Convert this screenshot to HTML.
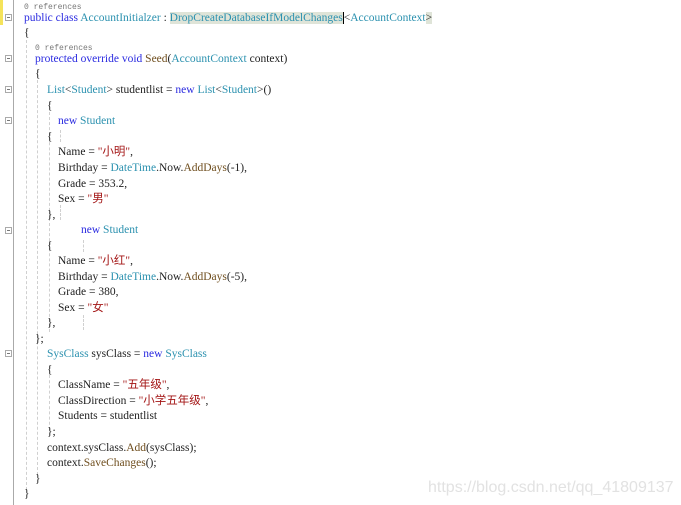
<!DOCTYPE html>
<html><head><meta charset="utf-8"><style>
body{margin:0;width:681px;height:505px;background:#fff;position:relative;overflow:hidden;font-family:"Liberation Serif","Noto Serif CJK SC",serif;font-size:11.5px;color:#1e1e1e}
.l{position:absolute;white-space:pre;line-height:14px;height:14px;margin-top:1px}
.r{font-family:"Liberation Mono",monospace;font-size:8px;color:#777}
.k{color:#2a2ae0}.t{color:#2b91af}.s{color:#a31515;font-family:"Liberation Serif","Noto Sans CJK SC",serif}.m{color:#6f4e1e}
.g{position:absolute;width:0;border-left:1px dashed #d0d0d0}
.b{position:absolute;left:5px;width:5px;height:5px;border:1px solid #aaa;background:#fff}
.b:after{content:"";position:absolute;left:1px;top:2px;width:3px;height:1px;background:#777}
.hl{background:#dfe4d8}
</style></head><body>
<div style="position:absolute;left:0;top:0;width:3px;height:25px;background:#f5e35a"></div>
<div style="position:absolute;left:13px;top:0;width:1px;height:505px;background:#aaa"></div>
<div class="g" style="left:26px;top:40px;height:450px"></div>
<div class="g" style="left:37px;top:80px;height:395px"></div>
<div class="g" style="left:49px;top:112px;height:220px"></div>
<div class="g" style="left:49px;top:375px;height:55px"></div>
<div class="g" style="left:60px;top:130px;height:12px"></div>
<div class="g" style="left:60px;top:205px;height:15px"></div>
<div class="g" style="left:83px;top:240px;height:12px"></div>
<div class="g" style="left:83px;top:315px;height:15px"></div>
<div class="b" style="top:14px"></div>
<div class="b" style="top:55px"></div>
<div class="b" style="top:86px"></div>
<div class="b" style="top:117px"></div>
<div class="b" style="top:227px"></div>
<div class="b" style="top:350px"></div>

<div class="l r" style="left:24px;top:0px">0 references</div>
<div class="l" style="left:24px;top:10px"><span class="k">public class</span> <span class="t">AccountInitialzer</span> : <span class="t hl">DropCreateDatabaseIfModelChanges</span><span style="border-left:1px solid #000">&lt;</span><span class="t">AccountContext</span><span class="hl">&gt;</span></div>
<div class="l" style="left:24px;top:25px">{</div>
<div class="l r" style="left:35px;top:41px">0 references</div>
<div class="l" style="left:35px;top:51px"><span class="k">protected override void</span> <span class="m">Seed</span>(<span class="t">AccountContext</span> context)</div>
<div class="l" style="left:35px;top:66px">{</div>
<div class="l" style="left:47px;top:82px"><span class="t">List</span>&lt;<span class="t">Student</span>&gt; studentlist = <span class="k">new</span> <span class="t">List</span>&lt;<span class="t">Student</span>&gt;()</div>
<div class="l" style="left:47px;top:98px">{</div>
<div class="l" style="left:58px;top:113px"><span class="k">new</span> <span class="t">Student</span></div>
<div class="l" style="left:47px;top:129px">{</div>
<div class="l" style="left:58px;top:144px">Name = <span class="s">"小明"</span>,</div>
<div class="l" style="left:58px;top:160px">Birthday = <span class="t">DateTime</span>.Now.<span class="m">AddDays</span>(-1),</div>
<div class="l" style="left:58px;top:176px">Grade = 353.2,</div>
<div class="l" style="left:58px;top:191px">Sex = <span class="s">"男"</span></div>
<div class="l" style="left:47px;top:207px">},</div>
<div class="l" style="left:81px;top:222px"><span class="k">new</span> <span class="t">Student</span></div>
<div class="l" style="left:47px;top:238px">{</div>
<div class="l" style="left:58px;top:253px">Name = <span class="s">"小红"</span>,</div>
<div class="l" style="left:58px;top:269px">Birthday = <span class="t">DateTime</span>.Now.<span class="m">AddDays</span>(-5),</div>
<div class="l" style="left:58px;top:284px">Grade = 380,</div>
<div class="l" style="left:58px;top:300px">Sex = <span class="s">"女"</span></div>
<div class="l" style="left:47px;top:315px">},</div>
<div class="l" style="left:35px;top:331px">};</div>
<div class="l" style="left:47px;top:346px"><span class="t">SysClass</span> sysClass = <span class="k">new</span> <span class="t">SysClass</span></div>
<div class="l" style="left:47px;top:362px">{</div>
<div class="l" style="left:58px;top:377px">ClassName = <span class="s">"五年级"</span>,</div>
<div class="l" style="left:58px;top:393px">ClassDirection = <span class="s">"小学五年级"</span>,</div>
<div class="l" style="left:58px;top:408px">Students = studentlist</div>
<div class="l" style="left:47px;top:424px">};</div>
<div class="l" style="left:47px;top:440px">context.sysClass.<span class="m">Add</span>(sysClass);</div>
<div class="l" style="left:47px;top:455px">context.<span class="m">SaveChanges</span>();</div>
<div class="l" style="left:35px;top:471px">}</div>
<div class="l" style="left:24px;top:486px">}</div>
<div class="l" style="left:428px;top:477px;font-family:'Liberation Sans',sans-serif;font-size:16px;color:#e2e2e2;height:20px;line-height:20px">https://blog.csdn.net/qq_41809137</div>
</body></html>
